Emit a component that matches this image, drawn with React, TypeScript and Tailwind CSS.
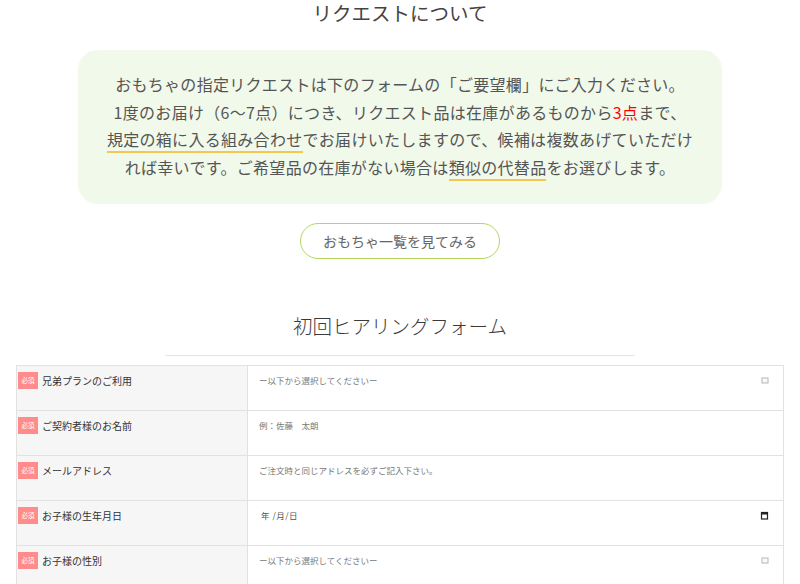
import React from 'react';

const FONT = { fontFamily: '"Noto Sans CJK JP", "Noto Sans", sans-serif' };

interface FormRow {
  label: string;
  kind: 'select' | 'text' | 'date';
  placeholder: string;
}

const rows: FormRow[] = [
  { label: '兄弟プランのご利用', kind: 'select', placeholder: 'ー以下から選択してくださいー' },
  { label: 'ご契約者様のお名前', kind: 'text', placeholder: '例：佐藤　太朗' },
  { label: 'メールアドレス', kind: 'text', placeholder: 'ご注文時と同じアドレスを必ずご記入下さい。' },
  { label: 'お子様の生年月日', kind: 'date', placeholder: '年 /月/日' },
  { label: 'お子様の性別', kind: 'select', placeholder: 'ー以下から選択してくださいー' },
  { label: 'お子様の年齢', kind: 'select', placeholder: 'ー以下から選択してくださいー' },
];

function SelectMark() {
  return (
    <svg width="8" height="7" viewBox="0 0 8 7" className="shrink-0">
      <rect x="1" y="1" width="6" height="5" fill="#fafafa" stroke="#b5b5b5" strokeWidth="1" />
    </svg>
  );
}

function CalendarMark() {
  return (
    <svg width="9" height="9" viewBox="0 0 9 9" className="shrink-0">
      <rect x="1.5" y="1.5" width="6" height="6.5" fill="none" stroke="#222" strokeWidth="1.2" />
      <rect x="1.5" y="1.5" width="6" height="2" fill="#222" />
    </svg>
  );
}

function Row({ row }: { row: FormRow }) {
  return (
    <div className="grid grid-cols-[231px_1fr] h-[45px] border-b border-[#e2e2e2]">
      <div className="bg-[#f6f6f6] border-r border-[#e2e2e2] flex items-start pt-[6px] pl-[1px] gap-[4px]">
        <span className="w-[20px] h-[17px] bg-[#ff8b8b] text-white text-[6.5px] leading-[17px] text-center shrink-0">
          必須
        </span>
        <span className="text-[10px] leading-[17px] text-[#333]">{row.label}</span>
      </div>
      <div className="flex items-start justify-between pt-[6px] pl-[11px] pr-[14px]">
        <span
          className={
            row.kind === 'date'
              ? 'text-[8.5px] leading-[17px] text-[#555] pl-[2px] tracking-[0.5px]'
              : 'text-[8.5px] leading-[17px] text-[#777]'
          }
        >
          {row.placeholder}
        </span>
        <span className="h-[17px] flex items-center">
          {row.kind === 'select' && <SelectMark />}
          {row.kind === 'date' && <CalendarMark />}
        </span>
      </div>
    </div>
  );
}

export default function App() {
  return (
    <div className="w-[800px] h-[584px] overflow-hidden bg-white" style={FONT}>
      <h2 className="text-center text-[19.5px] leading-[26px] text-[#444] font-normal">
        リクエストについて
      </h2>

      <div className="mt-[24px] mx-[78px] rounded-[20px] bg-[#f1f9ea] pt-[21px] pb-[23px] text-center text-[16px] leading-[27.5px] tracking-[0.3px] text-[#555]">
        おもちゃの指定リクエストは下のフォームの「ご要望欄」にご入力ください。
        <br />
        1度のお届け（6〜7点）につき、リクエスト品は在庫があるものから
        <span className="text-[#f00]">3点</span>まで、
        <br />
        <span className="border-b-2 border-[#f5c750]">規定の箱に入る組み合わせ</span>
        でお届けいたしますので、候補は複数あげていただけ
        <br />
        れば幸いです。ご希望品の在庫がない場合は
        <span className="border-b-2 border-[#f5c750]">類似の代替品</span>
        をお選びします。
      </div>

      <div className="mt-[19px] flex justify-center">
        <button className="w-[200px] h-[36px] rounded-full border-[1.5px] border-[#b2d95a] bg-white text-[14px] text-[#666]">
          おもちゃ一覧を見てみる
        </button>
      </div>

      <h2 className="mt-[54px] text-center text-[19.5px] leading-[26px] text-[#3a3a3a] font-light">
        初回ヒアリングフォーム
      </h2>
      <div className="mt-[16px] mx-auto w-[470px] h-px bg-[#e3e3e3]" />

      <div className="mt-[9px] mx-[16px] border border-b-0 border-[#e2e2e2]">
        {rows.map((row, i) => (
          <Row key={i} row={row} />
        ))}
      </div>
    </div>
  );
}
